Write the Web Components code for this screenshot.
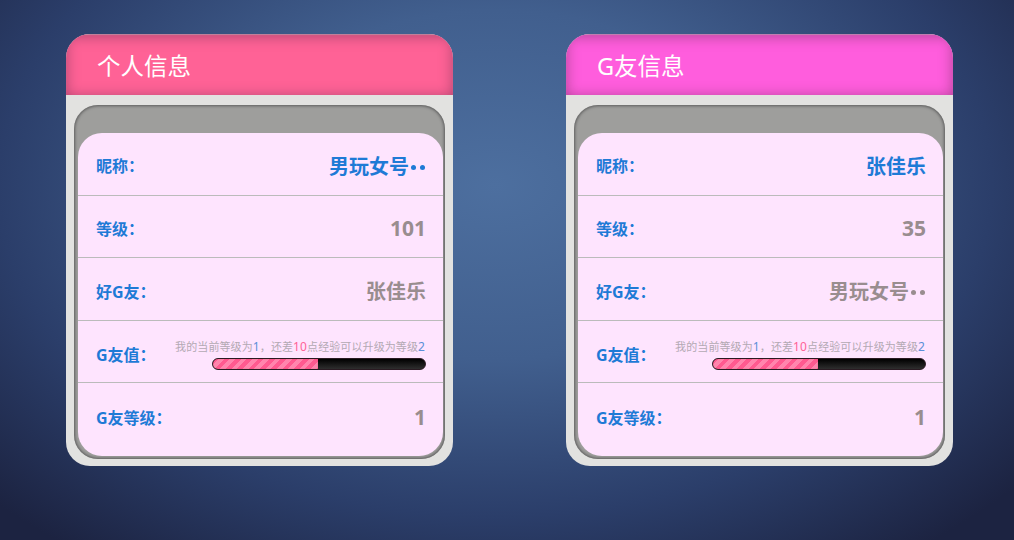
<!DOCTYPE html>
<html lang="zh">
<head>
<meta charset="utf-8">
<title>G友信息</title>
<style>
  html, body { height: 100%; }
  body {
    margin: 0;
    box-sizing: border-box;
    height: 540px;
    overflow: hidden;
    display: flex;
    align-items: flex-start;
    gap: 113px;
    padding: 34px 61px 0 66px;
    background: radial-gradient(ellipse 690px 460px at 495px 185px, #4d6f9f 0%, #415f8e 38%, #2b3e6a 72%, #1c2341 100%) #1c2341;
    font-family: "Noto Sans", "Noto Sans CJK SC", sans-serif;
  }
</style>
</head>
<body>
  <info-panel title="个人信息" color="#ff6296">
    <info-row label="昵称：" style="--dy:2px;--h:63px"><span style="color:#1e7ad6">男玩女号<i-dots></i-dots></span></info-row>
    <info-row label="等级：" num style="--dy:3px">101</info-row>
    <info-row label="好G友：">张佳乐</info-row>
    <info-row label="G友值：" style="--dy:6px"><xp-bar level="1" need="10" next="2" percent="49.5"></xp-bar></info-row>
    <info-row label="G友等级：" num last>1</info-row>
  </info-panel>
  <info-panel title="G友信息" color="#ff5ddd">
    <info-row label="昵称：" style="--dy:2px;--h:63px"><span style="color:#1e7ad6">张佳乐</span></info-row>
    <info-row label="等级：" num style="--dy:3px">35</info-row>
    <info-row label="好G友：">男玩女号<i-dots></i-dots></info-row>
    <info-row label="G友值：" style="--dy:6px"><xp-bar level="1" need="10" next="2" percent="49.5"></xp-bar></info-row>
    <info-row label="G友等级：" num last>1</info-row>
  </info-panel>

<script>
class InfoPanel extends HTMLElement {
  constructor() {
    super()
    this.attachShadow({ mode: 'open' })
    this.shadowRoot.innerHTML = `
      <style>
        :host {
          display: block;
          flex: none;
          width: 387px;
          height: 432px;
          border-radius: 24px;
          overflow: hidden;
          background: #e2e2e0;
        }
        header {
          height: 61px;
          box-sizing: border-box;
          padding: 0 0 0 31px;
          display: flex;
          align-items: center;
          color: #fff;
          font-size: 23.5px;
          background: var(--color);
          box-shadow: inset 0 2px 14px rgba(90, 40, 70, .5), inset 0 1px 1px rgba(220, 220, 220, .6);
        }
        .well {
          margin: 10px 8px 0;
          height: 354px;
          box-sizing: border-box;
          padding: 28px 2px 3px 4px;
          border-radius: 24px;
          background: #9e9e9c;
          box-shadow: inset 0 0 3px 1px #5c5c5c;
        }
        .card {
          height: 100%;
          border-radius: 24px;
          background: #fee4fe;
          overflow: hidden;
        }
      </style>
      <header></header>
      <div class="well"><div class="card"><slot></slot></div></div>
    `
  }

  connectedCallback() {
    this.shadowRoot.querySelector('header').textContent = this.getAttribute('title')
    this.style.setProperty('--color', this.getAttribute('color'))
    this.removeAttribute('title')
  }
}

class InfoRow extends HTMLElement {
  constructor() {
    super()
    this.attachShadow({ mode: 'open' })
    this.shadowRoot.innerHTML = `
      <style>
        :host {
          display: flex;
          align-items: center;
          justify-content: space-between;
          box-sizing: border-box;
          height: var(--h, 62.3px);
          padding: var(--dy, 4px) 17px 0 18px;
          border-bottom: 1px solid #bbb;
          font-weight: 700;
        }
        :host([last]) { border-bottom: 0; height: 70px; padding-top: 0; padding-bottom: 2px; }
        :host([num]) .value { font-size: 21px; }
        .label { color: #1e7ad6; font-size: 16px; }
        .value { color: #998d8f; font-size: 20px; }
      </style>
      <span class="label"></span>
      <span class="value"><slot></slot></span>
    `
  }

  connectedCallback() {
    this.shadowRoot.querySelector('.label').textContent = this.getAttribute('label')
  }
}

// the two dots after a cut-off nickname
class IDots extends HTMLElement {
  constructor() {
    super()
    this.attachShadow({ mode: 'open' })
    this.shadowRoot.innerHTML = `
      <style>
        :host { display: inline-flex; gap: 4px; margin: 0 1px 2px 2px; vertical-align: middle; }
        b { width: 5px; height: 5px; border-radius: 50%; background: currentColor; }
      </style>
      <b></b><b></b>
    `
  }
}

class XpBar extends HTMLElement {
  constructor() {
    super()
    this.attachShadow({ mode: 'open' })
    this.shadowRoot.innerHTML = `
      <style>
        :host { display: flex; flex-direction: column; align-items: flex-end; gap: 3px; font-weight: 400; }
        .txt { font-size: 11px; line-height: 16px; letter-spacing: .1px; padding-right: 1px; color: #b3a9b3; white-space: nowrap; }
        .txt b { font-size: 12px; font-weight: 400; color: #5b8fd8; }
        .txt em { font-size: 12px; font-style: normal; color: #ff6296; }
        .bar {
          width: 214px;
          height: 12px;
          box-sizing: border-box;
          border: 1px solid #2a1a22;
          border-radius: 6px;
          overflow: hidden;
          background: linear-gradient(#000, #2e2e2e);
        }
        .fill {
          height: 100%;
          background: repeating-linear-gradient(135deg, #ff5a90 0 4px, #ff85ad 4px 8px);
          box-shadow: inset 0 0 1px rgba(190, 20, 80, .6);
        }
      </style>
      <div class="txt">我的当前等级为<b class="a"></b>，还差<em></em>点经验可以升级为等级<b class="c"></b></div>
      <div class="bar"><div class="fill"></div></div>
    `
  }

  connectedCallback() {
    const root = this.shadowRoot
    root.querySelector('.a').textContent = this.getAttribute('level')
    root.querySelector('em').textContent = this.getAttribute('need')
    root.querySelector('.c').textContent = this.getAttribute('next')
    root.querySelector('.fill').style.width = this.getAttribute('percent') + '%'
  }
}

customElements.define('info-panel', InfoPanel)
customElements.define('info-row', InfoRow)
customElements.define('i-dots', IDots)
customElements.define('xp-bar', XpBar)
</script>
</body>
</html>
